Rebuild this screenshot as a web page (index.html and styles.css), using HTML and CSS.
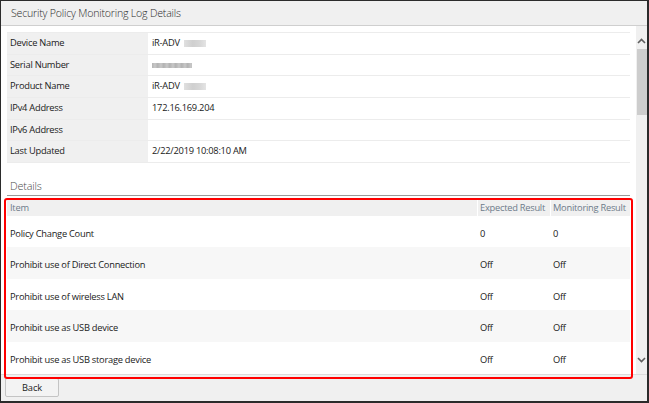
FILE: index.html
```html
<!DOCTYPE html>
<html>
<head>
<meta charset="utf-8">
<link rel="stylesheet" href="styles.css">
</head>
<body>
<div class="window">
  <div class="titlebar">Security Policy Monitoring Log Details</div>
  <div class="main">
    <div class="content">
      <div class="info">
        <div class="info-row"><div class="info-label">Device Name</div><div class="info-value">iR-ADV <span class="blur blur-model"></span></div></div>
        <div class="info-row"><div class="info-label">Serial Number</div><div class="info-value"><span class="blur blur-serial"></span></div></div>
        <div class="info-row"><div class="info-label">Product Name</div><div class="info-value">iR-ADV <span class="blur blur-model"></span></div></div>
        <div class="info-row"><div class="info-label">IPv4 Address</div><div class="info-value">172.16.169.204</div></div>
        <div class="info-row"><div class="info-label">IPv6 Address</div><div class="info-value"></div></div>
        <div class="info-row"><div class="info-label">Last Updated</div><div class="info-value">2/22/2019 10:08:10 AM</div></div>
      </div>
      <div class="section-title">Details</div>
      <div class="details">
        <div class="d-head">
          <div class="c-item">Item</div>
          <div class="c-exp">Expected Result</div>
          <div class="c-mon">Monitoring Result</div>
        </div>
        <div class="d-row"><div class="c-item">Policy Change Count</div><div class="c-exp">0</div><div class="c-mon">0</div></div>
        <div class="d-row alt"><div class="c-item">Prohibit use of Direct Connection</div><div class="c-exp">Off</div><div class="c-mon">Off</div></div>
        <div class="d-row"><div class="c-item">Prohibit use of wireless LAN</div><div class="c-exp">Off</div><div class="c-mon">Off</div></div>
        <div class="d-row alt"><div class="c-item">Prohibit use as USB device</div><div class="c-exp">Off</div><div class="c-mon">Off</div></div>
        <div class="d-row"><div class="c-item">Prohibit use as USB storage device</div><div class="c-exp">Off</div><div class="c-mon">Off</div></div>
      </div>
    </div>
    <div class="scrollbar">
      <svg class="arrow" width="11" height="8" viewBox="0 0 11 8"><path d="M2 6 L5.5 2.5 L9 6" fill="none" stroke="#5f5f5f" stroke-width="1.6"/></svg>
      <div class="thumb"></div>
      <div class="track-fill"></div>
      <svg class="arrow" width="11" height="8" viewBox="0 0 11 8"><path d="M2 2 L5.5 5.5 L9 2" fill="none" stroke="#5f5f5f" stroke-width="1.6"/></svg>
    </div>
  </div>
  <div class="footer">
    <button class="btn">Back</button>
  </div>
  <div class="highlight"></div>
</div>
</body>
</html>
```

FILE: styles.css
```css
html, body {
  margin: 0;
  padding: 0;
  background: #ffffff;
}
.window {
  position: relative;
  width: 649px;
  height: 403px;
  box-sizing: border-box;
  border: 1px solid #2b2b2b;
  border-right-width: 2px;
  border-bottom-width: 2px;
  display: flex;
  flex-direction: column;
  font-family: "Open Sans", "Noto Sans", sans-serif;
  font-size: 9.3px;
  letter-spacing: -0.25px;
  color: #1a1a1a;
  overflow: hidden;
}
.titlebar {
  height: 24px;
  flex: none;
  background: #f0f0f0;
  border-bottom: 1px solid #cfcfcf;
  font-size: 10.6px;
  font-weight: 300;
  letter-spacing: -0.2px;
  line-height: 24px;
  padding-left: 10px;
  color: #2a2a2a;
}
.main {
  flex: 1;
  display: flex;
  min-height: 0;
  background: #fff;
}
.content {
  flex: 1;
  padding: 6px 6px 0 6px;
  overflow: hidden;
}
.info {
  border-top: 1px solid #ececec;
}
.info-row {
  display: flex;
  height: 21.67px;
  box-sizing: border-box;
  border-bottom: 1px solid #ececec;
  line-height: 20.67px;
}
.info-label {
  width: 141px;
  flex: none;
  background: #f0f0f0;
  padding-left: 3px;
  box-sizing: border-box;
}
.info-value {
  flex: 1;
  padding-left: 4px;
  display: flex;
  align-items: center;
  gap: 4px;
}
.blur {
  display: inline-block;
  filter: blur(0.7px);
}
.blur-model {
  width: 22px;
  height: 7px;
  background: linear-gradient(90deg, #e0e0e0 0%, #cfcfcf 40%, #d6d6d6 70%, #e4e4e4 100%);
}
.blur-serial {
  width: 40px;
  height: 5px;
  margin-top: 1px;
  background: repeating-linear-gradient(90deg, #b4b4b4 0px, #c8c8c8 3px, #b0b0b0 6px);
}
.section-title {
  padding-top: 13px;
  padding-left: 3px;
  line-height: 19px;
  font-size: 10.8px;
  font-weight: 300;
  letter-spacing: -0.15px;
  color: #4a4a4a;
  border-bottom: 1px solid #9a9a9a;
}
.details {
  margin-top: 4px;
}
.d-head {
  display: flex;
  height: 16px;
  line-height: 16px;
  background: #f0f0f0;
  color: #6d7b8a;
  white-space: nowrap;
}
.d-head > div {
  border-left: 1px solid #fff;
}
.d-head > .c-item {
  border-left: none;
}
.d-row {
  display: flex;
  height: 31.5px;
  box-sizing: border-box;
  padding-top: 2px;
  line-height: 31.5px;
  background: #fff;
  white-space: nowrap;
}
.d-row.alt {
  background: #f7f7f7;
}
.c-item {
  flex: 1;
  padding-left: 3px;
}
.c-exp {
  width: 70px;
  flex: none;
  padding-left: 2px;
}
.c-mon {
  width: 77px;
  flex: none;
  padding-left: 2px;
}
.d-row .c-exp, .d-row .c-mon {
  padding-left: 3px;
}
.scrollbar {
  width: 11px;
  flex: none;
  background: #f0f0f0;
  display: flex;
  flex-direction: column;
  align-items: center;
  padding-top: 11px;
  padding-bottom: 10px;
}
.arrow {
  flex: none;
  display: block;
}
.thumb {
  width: 10px;
  height: 66px;
  background: #cdcdcd;
  margin-top: 4px;
  flex: none;
}
.track-fill {
  flex: 1;
}
.footer {
  height: 23px;
  flex: none;
  background: #f0f0f0;
  border-top: 1px solid #dcdcdc;
  padding: 3px 0 0 4px;
}
.btn {
  width: 54px;
  height: 19px;
  border: 1px solid #c4c4c4;
  border-radius: 2px;
  background: #f3f3f3;
  font-family: "Open Sans", "Noto Sans", sans-serif;
  font-size: 9.3px;
  letter-spacing: -0.1px;
  color: #1a1a1a;
  padding: 0;
  display: block;
}
.highlight {
  position: absolute;
  left: 3px;
  top: 197px;
  width: 629px;
  height: 181px;
  box-sizing: border-box;
  border: 2px solid #ff0000;
  border-radius: 3px;
  pointer-events: none;
}
```
